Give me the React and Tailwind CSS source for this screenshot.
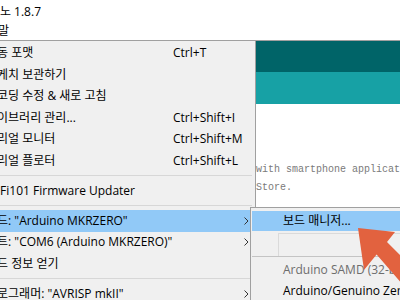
import React from "react";

const UI = "font-['Open_Sans','Noto_Sans_CJK_KR',sans-serif]";

const items = [
  { label: "자동 포맷", sc: "Ctrl+T" },
  { label: "스케치 보관하기" },
  { label: "인코딩 수정 & 새로 고침" },
  { label: "라이브러리 관리...", sc: "Ctrl+Shift+I" },
  { label: "시리얼 모니터", sc: "Ctrl+Shift+M" },
  { label: "시리얼 플로터", sc: "Ctrl+Shift+L" },
  { sep: true },
  { label: "WiFi101 Firmware Updater" },
  { sep: true },
  { label: '보드: "Arduino MKRZERO"', sub: true, active: true },
  { label: '포트: "COM6 (Arduino MKRZERO)"', sub: true },
  { label: "보드 정보 얻기" },
  { sep: true },
  { label: '프로그래머: "AVRISP mkII"', sub: true },
];

function Chevron() {
  return (
    <svg width="5" height="8" viewBox="0 0 5 8" className="shrink-0">
      <polyline points="0.5,0.5 4,4 0.5,7.5" fill="none" stroke="#333" strokeWidth="1" />
    </svg>
  );
}

function MenuRow({ item }) {
  if (item.sep) {
    return (
      <div className="h-[8.5px] flex items-center mr-[3px]">
        <div className="h-px w-full bg-[#d7d7d7]" />
      </div>
    );
  }
  return (
    <div className={`h-[21.5px] flex items-center mr-[2px] ${item.active ? "bg-[#91c9f7]" : ""}`}>
      <span className="-ml-[14px] w-[187px] shrink-0 whitespace-nowrap">{item.label}</span>
      <span className="flex-1 whitespace-nowrap">{item.sc}</span>
      {item.sub && <span className="mr-[4px] flex"><Chevron /></span>}
    </div>
  );
}

export default function App() {
  return (
    <div className={`relative w-[400px] h-[300px] overflow-hidden bg-white text-[12px] text-black leading-none ${UI}`}>
      {/* title bar */}
      <div className="h-[21px] pt-[2px] flex items-center">
        <div className="w-[41px] flex justify-end whitespace-nowrap">아두이노 1.8.7</div>
      </div>
      {/* menu bar */}
      <div className="h-[19px] flex items-center">
        <div className="w-[9px] flex justify-end whitespace-nowrap">파일 편집 스케치 툴 도움말</div>
      </div>
      <div className="h-px bg-[#a0a0a0]" />

      <div className="flex">
        {/* dropdown menu */}
        <div className="w-[256px] shrink-0 bg-[#f0f0f0] border-r border-[#a0a0a0] pt-[1.5px] h-[260px]">
          {items.map((it, i) => (
            <MenuRow key={i} item={it} />
          ))}
        </div>

        {/* editor side */}
        <div className="flex-1 flex flex-col">
          <div className="h-[31px] bg-[#006468]" />
          <div className="h-[32px] bg-[#17a1a5]" />
          <div className="pt-[57px] font-['Liberation_Mono',monospace] text-[10px] leading-[18px] text-[#7a7a7a] whitespace-nowrap">
            <div>with smartphone application</div>
            <div>Store.</div>
          </div>
        </div>
      </div>

      {/* board submenu */}
      <div className="absolute left-[250px] top-[207px] w-[160px] h-[100px] bg-[#f0f0f0] border-l border-t border-[#a0a0a0] pt-[3px] pl-[1px]">
        <div className="h-[20px] bg-[#91c9f7] pl-[31px] flex items-center whitespace-nowrap">보드 매니저...</div>
        <div className="h-[25px] pt-[2px]">
          <div className="ml-[26px] h-[23px] border-t border-l border-[#dadada]" />
        </div>
        <div className="h-px bg-[#c4c4c4]" />
        <div className="pt-[2px]">
          <div className="h-[21.5px] pl-[31px] flex items-center whitespace-nowrap text-[#6d6d6d]">
            Arduino SAMD (32-bits ARM Cortex-M0+) Boards
          </div>
          <div className="h-[21.5px] pl-[31px] flex items-center whitespace-nowrap">
            Arduino/Genuino Zero (Programming Port)
          </div>
        </div>
      </div>

      {/* annotation arrow */}
      <svg className="absolute left-0 top-0 pointer-events-none" width="400" height="300" viewBox="0 0 400 300">
        <polygon
          points="358,228 395,232 387,242 440,295 425,310 376.6,254.6 364,270"
          fill="#e2623f"
        />
      </svg>
    </div>
  );
}
